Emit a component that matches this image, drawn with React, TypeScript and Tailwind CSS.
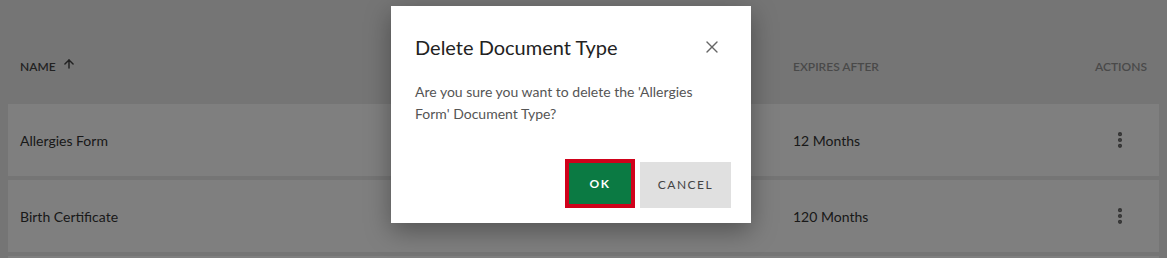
import { X, ArrowUp, MoreVertical } from "lucide-react";

const rows = [
  { name: "Allergies Form", expires: "12 Months" },
  { name: "Birth Certificate", expires: "120 Months" },
  { name: "", expires: "" },
];

const App = () => {
  return (
    <div
      className="relative h-[258px] w-full overflow-hidden bg-[#ebebeb]"
      style={{ fontFamily: "Lato, 'Open Sans', sans-serif" }}
    >
      <div className="px-2">
        <div className="flex h-[104px] items-start px-3 pt-[58px] text-[12px] font-semibold uppercase text-[#939393]">
          <div className="flex w-[773px] items-center gap-[6px] text-[#444]">
            <span>Name</span>
            <ArrowUp size={14} strokeWidth={2.5} className="-mt-[6px]" />
          </div>
          <div className="flex-1">Expires After</div>
          <div className="text-right">Actions</div>
        </div>

        <div className="flex flex-col gap-1">
          {rows.map((row, i) => (
            <div
              key={i}
              className="flex h-[72px] items-center bg-white px-3 text-[14px] text-[#333]"
            >
              <div className="w-[773px]">{row.name}</div>
              <div className="flex-1">{row.expires}</div>
              {row.name && (
                <div className="mr-[17px] text-[#666]">
                  <MoreVertical size={20} strokeWidth={3} />
                </div>
              )}
            </div>
          ))}
        </div>
      </div>

      <div className="absolute inset-0 bg-black/50" />

      <div className="absolute left-[391px] top-[6px] w-[360px] bg-white shadow-[0_8px_24px_rgba(0,0,0,0.35)]">
        <div className="flex items-center justify-between pl-6 pr-[31px] pt-[27px]">
          <h2 className="text-[20px] leading-[28px] text-[#222]">
            Delete Document Type
          </h2>
          <X size={20} strokeWidth={1.6} className="-mr-[2px] text-[#666]" />
        </div>
        <p className="mt-[20px] px-6 text-[14px] leading-[22px] text-[#555]">
          Are you sure you want to delete the 'Allergies Form' Document Type?
        </p>
        <div className="mt-[34px] flex items-end justify-end gap-[5px] pb-[15px] pr-5">
          <div className="border-4 border-[#d0021b]">
            <button className="flex h-[41px] w-[62px] items-center justify-center bg-[#0b7a43] text-[12px] font-bold tracking-[1.5px] text-white">
              OK
            </button>
          </div>
          <button className="flex h-[46px] w-[91px] items-center justify-center bg-[#e0e0e0] text-[12px] tracking-[1.5px] text-[#444]">
            CANCEL
          </button>
        </div>
      </div>
    </div>
  );
};

export default App;
